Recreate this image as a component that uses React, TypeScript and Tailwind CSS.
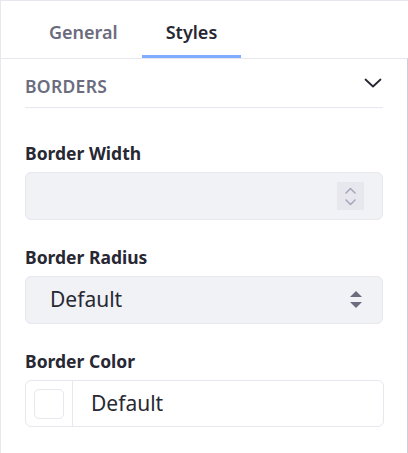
import React from 'react';

const ChevronDown = () => <svg width="18" height="10" viewBox="0 0 18 10" fill="none">
    <path d="M1.5 1.5 L9 8.5 L16.5 1.5" stroke="#272833" strokeWidth="1.8" strokeLinecap="round" strokeLinejoin="round" />
  </svg>;

const Spinner = () => <div className="w-[27px] h-[28px] bg-[#e7e7ed] flex flex-col items-center justify-center gap-[5px]">
    <svg width="11" height="7" viewBox="0 0 11 7" fill="none">
      <path d="M1 6 L5.5 1.5 L10 6" stroke="#a7a9bc" strokeWidth="1.6" strokeLinecap="round" strokeLinejoin="round" />
    </svg>
    <svg width="11" height="7" viewBox="0 0 11 7" fill="none">
      <path d="M1 1 L5.5 5.5 L10 1" stroke="#a7a9bc" strokeWidth="1.6" strokeLinecap="round" strokeLinejoin="round" />
    </svg>
  </div>;

const SelectArrows = () => <svg width="12" height="18" viewBox="0 0 12 18">
    <path d="M6 0 L12 6 L0 6 Z" fill="#6b6c7e" />
    <path d="M0 11 L12 11 L6 17 Z" fill="#6b6c7e" />
  </svg>;

const Label = ({ children }: { children: React.ReactNode }) => <label className="block text-[17.5px] leading-[26px] font-bold text-[#272833] mb-[6px]">
    {children}
  </label>;

const App = () => {
  return <div className="w-[408px] h-[453px] bg-white border-t border-l border-[#e7e7ed] overflow-hidden" style={{ fontFamily: '"Noto Sans", "Open Sans", sans-serif' }}>
      {/* Tabs */}
      <div className="flex items-end h-[57px] pl-[24px]">
        <button className="h-[57px] px-[24px] pt-[8px] text-[18px] font-semibold text-[#6b6c7e] border-b-[3px] border-transparent">
          General
        </button>
        <button className="h-[57px] px-[24px] pt-[8px] text-[18px] font-semibold text-[#272833] border-b-[3px] border-[#80acff]">
          Styles
        </button>
      </div>
      {/* Panel */}
      <div className="w-[407px] h-[400px] border-t border-r border-t-[#e7e7ed] border-r-[#cdced9] px-[24px]">
        <div className="flex items-start justify-between h-[49px] border-b border-[#e7e7ed]">
          <span className="mt-[14px] text-[17.5px] leading-[26px] font-semibold uppercase tracking-[0.3px] text-[#6b6c7e]">
            Borders
          </span>
          <span className="mt-[19px] mr-[1px]">
            <ChevronDown />
          </span>
        </div>

        <div className="pt-[32px] flex flex-col gap-[24px]">
          <div>
            <Label>Border Width</Label>
            <div className="h-[48px] rounded-[6px] bg-[#f1f2f5] border border-[#e7e7ed] flex items-center justify-end pr-[18px]">
              <Spinner />
            </div>
          </div>

          <div>
            <Label>Border Radius</Label>
            <div className="h-[48px] rounded-[6px] bg-[#f1f2f5] border border-[#e7e7ed] flex items-center justify-between pl-[24px] pr-[20px]">
              <span className="text-[21px] text-[#272833]">Default</span>
              <SelectArrows />
            </div>
          </div>

          <div>
            <Label>Border Color</Label>
            <div className="h-[47px] w-[359px] rounded-[6px] bg-white border border-[#e7e7ed] flex items-stretch">
              <div className="w-[47px] border-r border-[#e7e7ed] flex items-center justify-center">
                <div className="w-[30px] h-[30px] rounded-[5px] border border-[#e7e7ed] bg-white" />
              </div>
              <div className="flex items-center pl-[18px]">
                <span className="text-[21px] text-[#272833]">Default</span>
              </div>
            </div>
          </div>
        </div>
      </div>
    </div>;
};

export default App;
